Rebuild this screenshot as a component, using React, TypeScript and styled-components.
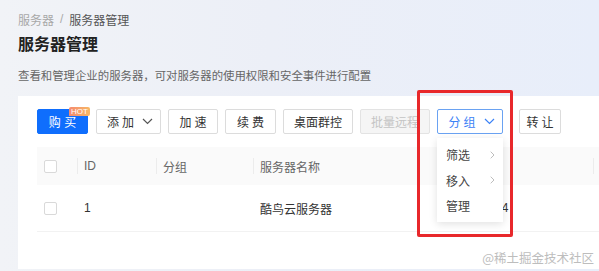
import React from 'react';
import styled, { createGlobalStyle } from 'styled-components';

const GlobalStyle = createGlobalStyle`
    html, body {
        margin: 0;
        padding: 0;
    }

    body {
        font-family: 'Liberation Sans', 'Noto Sans CJK SC', sans-serif;
        overflow: hidden;
    }
`;

const toolButtons = [
    { label: '添加', w: 65, spaced: true, caret: true },
    { label: '加速', w: 50, spaced: true },
    { label: '续费', w: 51, spaced: true },
    { label: '桌面群控', w: 70 },
    { label: '批量远程', w: 70, disabled: true }
];

const menuItems = [
    { label: '筛选', sub: true },
    { label: '移入', sub: true },
    { label: '管理' }
];

function Caret({ color }: { color: string }) {
    return (
        <svg width="11" height="7" viewBox="0 0 11 7" fill="none">
            <path d="M1 1l4.5 4.5L10 1" stroke={color} strokeWidth="1.2" />
        </svg>
    );
}

function Arrow() {
    return (
        <svg width="5" height="8" viewBox="0 0 5 8" fill="none">
            <path d="M0.7 0.7L4 4L0.7 7.3" stroke="#b5b5b5" strokeWidth="0.9" />
        </svg>
    );
}

function App() {
    return (
        <Page>
            <GlobalStyle />
            <Breadcrumb>
                <Crumb>服务器</Crumb>
                <Sep>/</Sep>
                <Crumb current>服务器管理</Crumb>
            </Breadcrumb>
            <Title>服务器管理</Title>
            <Desc>查看和管理企业的服务器，可对服务器的使用权限和安全事件进行配置</Desc>
            <Card>
                <Toolbar>
                    <BuyButton>
                        购 买
                        <Hot>HOT</Hot>
                    </BuyButton>
                    {toolButtons.map(b => (
                        <ToolButton key={b.label} w={b.w} spaced={b.spaced} disabled={b.disabled}>
                            {b.label}
                            {b.caret && <Caret color="#555" />}
                        </ToolButton>
                    ))}
                    <Dropdown>
                        <GroupButton>
                            分组
                            <Caret color="#3b82f6" />
                        </GroupButton>
                        <Menu>
                            {menuItems.map(item => (
                                <MenuItem key={item.label}>
                                    {item.label}
                                    {item.sub && <Arrow />}
                                </MenuItem>
                            ))}
                        </Menu>
                        <Highlight />
                    </Dropdown>
                    <ToolButton w={42} spaced>
                        转让
                    </ToolButton>
                </Toolbar>
                <Table>
                    <HeadRow>
                        <CheckCell>
                            <Check />
                        </CheckCell>
                        <HeadCell w={79}>ID</HeadCell>
                        <HeadCell w={97}>分组</HeadCell>
                        <HeadCell w={185}>服务器名称</HeadCell>
                        <HeadCell w={155}>IP地址</HeadCell>
                        <HeadCell w={60}></HeadCell>
                    </HeadRow>
                    <BodyRow>
                        <CheckCell>
                            <Check />
                        </CheckCell>
                        <Cell w={79}>1</Cell>
                        <Cell w={97}></Cell>
                        <Cell w={185}>酷鸟云服务器</Cell>
                        <Cell w={155}>10.10.100.4</Cell>
                        <Cell w={60}></Cell>
                    </BodyRow>
                </Table>
            </Card>
            <Watermark>@稀土掘金技术社区</Watermark>
        </Page>
    );
}

const Page = styled.div`
    position: relative;
    height: 271px;
    box-sizing: border-box;
    padding: 9px 0 0 18px;
    background: linear-gradient(90deg, #f1f3f7 0%, #eceff7 45%, #e8eefa 100%);
    font-family: 'Liberation Sans', 'Noto Sans CJK SC', sans-serif;
    overflow: hidden;
`;

const Breadcrumb = styled.div`
    display: flex;
    align-items: center;
    height: 20px;
    font-size: 12px;
`;

const Crumb = styled.span<{ current?: boolean }>`
    color: ${p => (p.current ? '#555' : '#a8a8a8')};
`;

const Sep = styled.span`
    color: #aaa;
    margin: 0 6px;
`;

const Title = styled.h1`
    margin: 4px 0 0;
    height: 24px;
    line-height: 24px;
    font-size: 16px;
    font-weight: 700;
    color: #222;
`;

const Desc = styled.p`
    margin: 9px 0 0;
    height: 20px;
    line-height: 20px;
    font-size: 11.4px;
    color: #666;
`;

const Card = styled.section`
    margin-top: 10px;
    height: 173px;
    background: #fff;
    padding: 13px 0 0 19px;
    box-sizing: border-box;
`;

const Toolbar = styled.div`
    display: flex;
    align-items: center;
    gap: 7px;
    height: 25px;
`;

const BaseButton = styled.button`
    position: relative;
    display: flex;
    align-items: center;
    justify-content: center;
    gap: 6px;
    height: 25px;
    padding: 0;
    box-sizing: border-box;
    border-radius: 2px;
    font-family: inherit;
    font-size: 12px;
    cursor: pointer;
`;

const BuyButton = styled(BaseButton)`
    width: 51px;
    margin-right: 1px;
    background: #0f6efd;
    border: 1px solid #0f6efd;
    color: #fff;
`;

const Hot = styled.span`
    position: absolute;
    top: -3px;
    right: -3px;
    width: 21px;
    height: 9px;
    line-height: 9px;
    font-size: 8px;
    color: #fff;
    text-align: center;
    text-indent: 0;
    letter-spacing: 0;
    border-radius: 2px 2px 2px 0;
    background: linear-gradient(90deg, #f58a6f, #f7b865);
`;

const ToolButton = styled(BaseButton)<{ w: number; spaced?: boolean }>`
    width: ${p => p.w}px;
    background: ${p => (p.disabled ? '#f5f5f5' : '#fff')};
    border: 1px solid ${p => (p.disabled ? '#e3e3e3' : '#dcdcdc')};
    color: ${p => (p.disabled ? '#c4c4c4' : '#333')};
    letter-spacing: ${p => (p.spaced ? '3px' : '0')};
    text-indent: ${p => (p.spaced ? '3px' : '0')};
    cursor: ${p => (p.disabled ? 'not-allowed' : 'pointer')};

    svg {
        margin-left: -1px;
    }
`;

const Dropdown = styled.div`
    position: relative;
    margin-right: 9px;
`;

const GroupButton = styled(BaseButton)`
    width: 66px;
    background: #fff;
    border: 1px solid #6aa2f2;
    color: #3b82f6;
    letter-spacing: 3px;
    text-indent: 3px;

    svg {
        margin-left: -1px;
    }
`;

const Menu = styled.ul`
    position: absolute;
    top: 29px;
    left: 0;
    width: 66px;
    margin: 0;
    padding: 4px 0 3px;
    list-style: none;
    background: #fff;
    box-shadow: 0 2px 8px rgba(0, 0, 0, 0.12);
    z-index: 2;
`;

const MenuItem = styled.li`
    display: flex;
    align-items: center;
    justify-content: space-between;
    height: 25.5px;
    padding: 0 8px 0 9px;
    font-size: 12px;
    color: #444;
`;

const Highlight = styled.div`
    position: absolute;
    left: -20px;
    top: -19px;
    width: 96px;
    height: 147px;
    box-sizing: border-box;
    border: 3px solid #e8282b;
    border-radius: 2px;
    z-index: 3;
    pointer-events: none;
`;

const Table = styled.div`
    margin-top: 13px;
`;

const HeadRow = styled.div`
    display: flex;
    height: 38px;
    align-items: center;
    background: #fafafa;
`;

const BodyRow = styled.div`
    display: flex;
    height: 46px;
    align-items: center;
    border-bottom: 1px solid #f2f2f2;
`;

const CheckCell = styled.div`
    width: 40px;
    flex: none;
    display: flex;
    justify-content: flex-start;
    padding-left: 7px;
    box-sizing: border-box;
`;

const Check = styled.span`
    width: 13px;
    height: 13px;
    box-sizing: border-box;
    border: 1px solid #d9d9d9;
    border-radius: 2px;
    background: #fff;
`;

const HeadCell = styled.div<{ w: number }>`
    position: relative;
    width: ${p => p.w}px;
    flex: none;
    padding-left: 7px;
    box-sizing: border-box;
    font-size: 12px;
    color: #666;

    &::before {
        content: '';
        position: absolute;
        left: 0;
        top: 50%;
        width: 1px;
        height: 16px;
        margin-top: -8px;
        background: #ececec;
    }
`;

const Cell = styled.div<{ w: number }>`
    width: ${p => p.w}px;
    flex: none;
    padding-left: 7px;
    box-sizing: border-box;
    font-size: 12px;
    color: #333;
    white-space: nowrap;
`;

const Watermark = styled.div`
    position: absolute;
    right: 5px;
    bottom: 4px;
    font-size: 12.5px;
    color: #bdbdbd;
    font-family: 'Noto Sans CJK SC', serif;
`;

export default App;
